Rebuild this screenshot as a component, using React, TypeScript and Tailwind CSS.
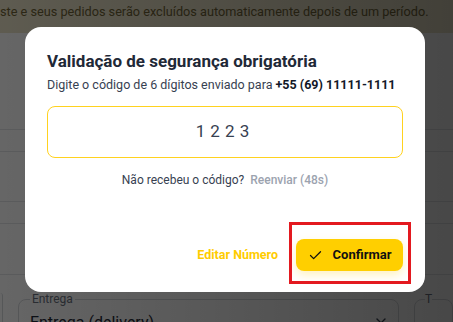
import { Check, X } from "lucide-react";

export default function App() {
  return (
    <div className="relative h-[322px] w-[453px] overflow-hidden bg-white font-['Roboto','Liberation_Sans',sans-serif]">
      {/* page behind the dialog */}
      <div className="flex h-[33px] items-start overflow-hidden whitespace-nowrap bg-[#ebe4c9] pt-[2px] text-[12.7px] text-[#6f6336]">
        ste e seus pedidos serão excluídos automaticamente depois de um período.
      </div>
      <div className="h-[97px] border-b border-[#e3e5e8]" />
      <div className="h-[22px] border-b border-[#e3e5e8]" />
      <div className="h-[50px] border-b border-[#e3e5e8]" />
      <div className="h-[22px] border-b border-[#e3e5e8]" />
      <div className="h-[51px] border-b border-[#e3e5e8]" />
      <div className="flex gap-[15px] pt-[18px]">
        <div className="h-[40px] w-[3px] rounded-r-lg border-r border-[#d6d9dd]" />
        <fieldset className="relative h-[40px] w-[401px] rounded-lg border border-[#d6d9dd] px-[11px]">
          <legend className="px-[2px] text-[12px] leading-[12px] text-[#6b7280]">Entrega</legend>
          <div className="flex items-center justify-between pt-[6px] text-[16px] text-[#1f2937]">
            <span>Entrega (delivery)</span>
            <X size={16} className="mr-[-2px] text-[#374151]" />
          </div>
        </fieldset>
        <fieldset className="h-[40px] w-[40px] rounded-lg border border-[#d6d9dd] px-[10px]">
          <legend className="text-[12px] leading-[12px] text-[#6b7280]">T</legend>
        </fieldset>
      </div>

      {/* overlay */}
      <div className="absolute inset-0 bg-gradient-to-r from-black/60 to-black/72" />

      {/* dialog */}
      <div className="absolute left-[25px] top-[27px] flex h-[265px] w-[400px] flex-col rounded-2xl bg-white px-[22px] pt-[22px]">
        <h2 className="text-[17px] font-bold leading-[24px] text-[#1f2937]">
          Validação de segurança obrigatória
        </h2>
        <p className="mt-[3px] whitespace-nowrap text-[12.5px] leading-[18px] text-[#374151]">
          Digite o código de 6 dígitos enviado para{" "}
          <span className="font-bold text-[#111827]">+55 (69) 11111-1111</span>
        </p>
        <div className="mt-[12px] flex h-[52px] items-center justify-center rounded-lg border border-[#ffd21f] text-[17px] tracking-[0.3em] text-[#374151]">
          1223
        </div>
        <p className="mt-[13px] text-center text-[12px] text-[#374151]">
          Não recebeu o código?{" "}
          <span className="ml-[3px] font-medium text-[#9ca3af]">Reenviar (48s)</span>
        </p>
        <div className="mt-auto mb-[21px] flex items-center justify-end gap-[18px]">
          <span className="text-[12.5px] font-bold text-[#ffcc00]">Editar Número</span>
          <button className="flex h-[32px] w-[107px] items-center justify-center gap-[10px] rounded-lg bg-[#ffcf00] text-[13px] font-bold text-[#111111] shadow-[0_4px_10px_rgba(255,204,0,0.25)]">
            <Check size={15} strokeWidth={2} />
            Confirmar
          </button>
        </div>
      </div>

      {/* annotation frame */}
      <div className="absolute left-[289px] top-[222px] h-[62px] w-[122px] border-[3px] border-[#e3191f]" />
    </div>
  );
}
